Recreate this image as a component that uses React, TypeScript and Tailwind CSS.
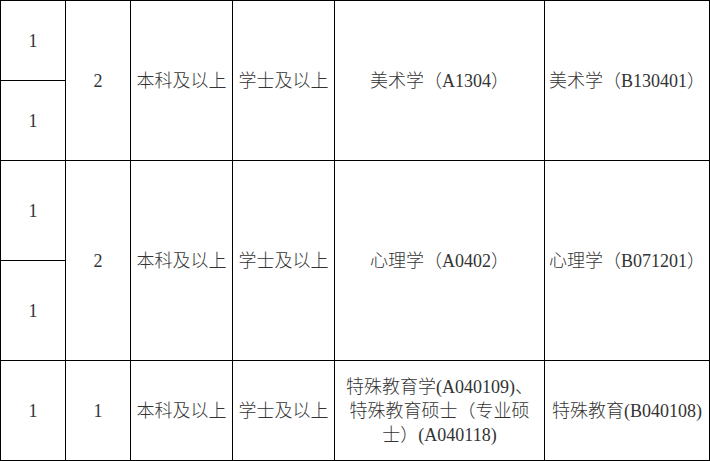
import React from "react";

const font = {
  fontFamily: '"Liberation Serif", "Noto Sans CJK SC", serif',
};

function Cell({ children, span = false, className = "" }: { children: React.ReactNode; span?: boolean; className?: string }) {
  return (
    <div
      className={`bg-white flex items-center justify-center text-center text-[18px] leading-[24px] font-light text-[#333333] ${span ? "row-span-2" : ""} ${className}`}
    >
      {children}
    </div>
  );
}

export default function App() {
  return (
    <div className="w-[710px] h-[461px] bg-white" style={font}>
      <div className="grid grid-cols-[64px_64px_101px_101px_209px_164px] grid-rows-[79px_79px_99px_99px_99px] gap-px p-px bg-black w-[710px] h-[461px]">
        <Cell>1</Cell>
        <Cell span>2</Cell>
        <Cell span>本科及以上</Cell>
        <Cell span>学士及以上</Cell>
        <Cell span>美术学（A1304）</Cell>
        <Cell span>美术学（B130401）</Cell>
        <Cell>1</Cell>

        <Cell>1</Cell>
        <Cell span>2</Cell>
        <Cell span>本科及以上</Cell>
        <Cell span>学士及以上</Cell>
        <Cell span>心理学（A0402）</Cell>
        <Cell span>心理学（B071201）</Cell>
        <Cell>1</Cell>

        <Cell>1</Cell>
        <Cell>1</Cell>
        <Cell>本科及以上</Cell>
        <Cell>学士及以上</Cell>
        <Cell className="px-1">
          <span>
            特殊教育学(A040109)、
            <br />
            特殊教育硕士（专业硕
            <br />
            士）(A040118)
          </span>
        </Cell>
        <Cell>特殊教育(B040108)</Cell>
      </div>
    </div>
  );
}
